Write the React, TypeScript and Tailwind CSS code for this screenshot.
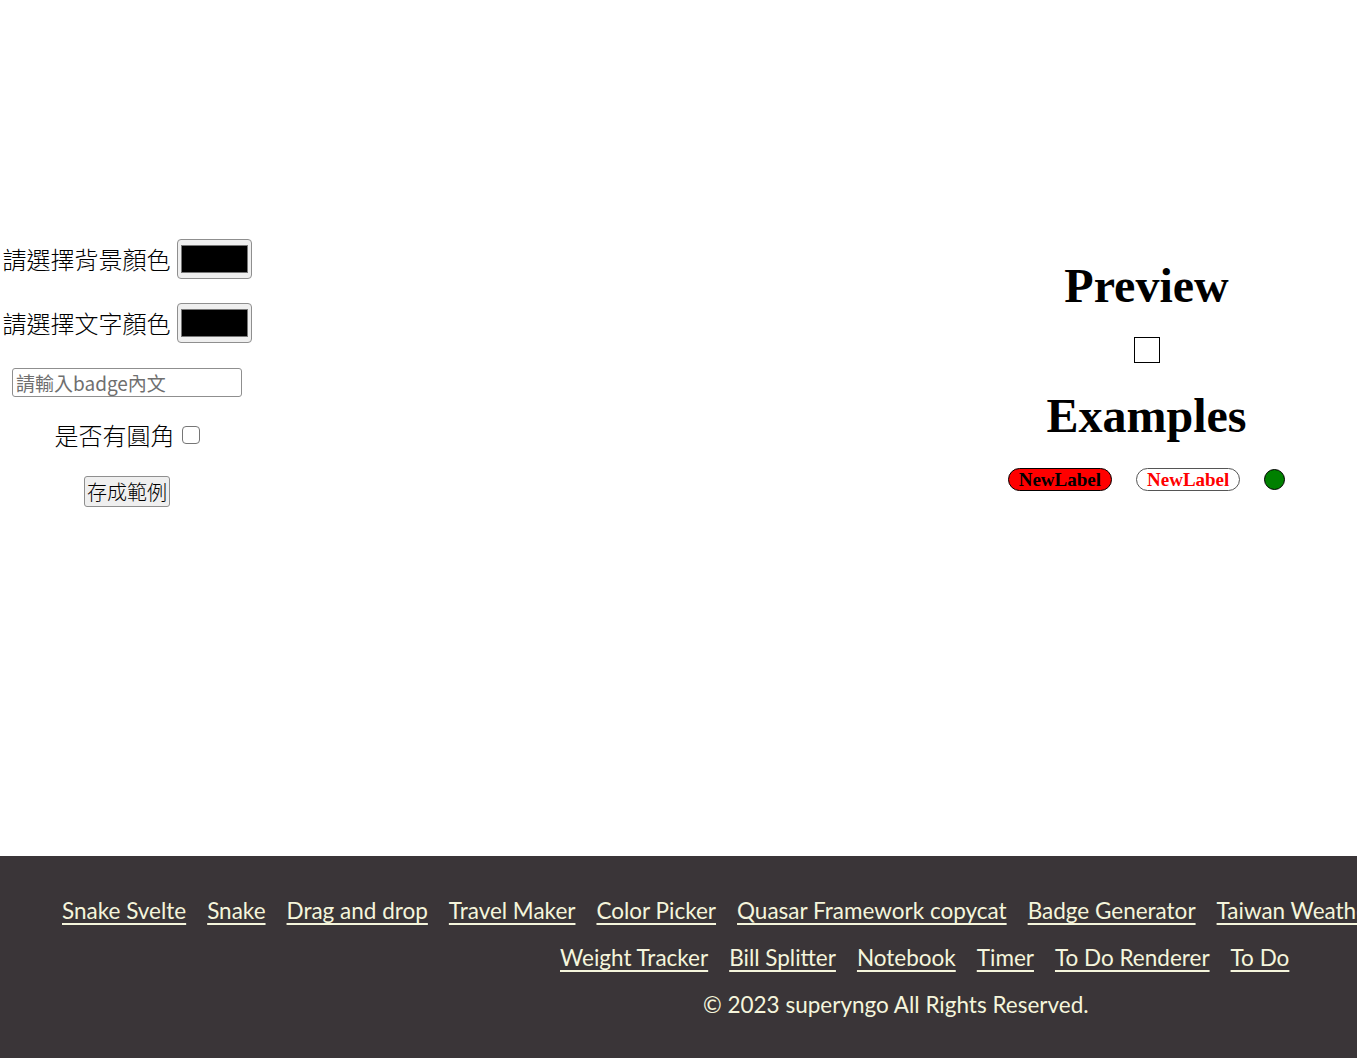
import React, { useState } from 'react';

const cjk = "font-['Noto_Sans_CJK_TC','Noto_Sans',sans-serif]";

const rowOneLinks = [
  'Snake Svelte',
  'Snake',
  'Drag and drop',
  'Travel Maker',
  'Color Picker',
  'Quasar Framework copycat',
  'Badge Generator',
  'Taiwan Weather',
];

const rowTwoLinks = ['Weight Tracker', 'Bill Splitter', 'Notebook', 'Timer', 'To Do Renderer', 'To Do'];

const ColorSwatch: React.FC = () => (
  <div className="w-[75px] h-[40px] rounded-[4px] border border-[#8f8f8f] bg-[#efefef] px-[3px] py-[5px] flex">
    <div className="flex-1 border border-[#777] bg-black" />
  </div>
);

const App: React.FC = () => {
  const [text, setText] = useState('');
  const [rounded, setRounded] = useState(false);

  return (
    <div className="min-h-screen bg-white">
      <main className="h-[856px] flex justify-between">
        {/* controls */}
        <div className={`w-[254px] pt-[239px] flex flex-col items-center text-black ${cjk}`}>
          <div className="h-[40px] flex items-center gap-[6px]">
            <span className="text-[24px] leading-[32px] font-light">請選擇背景顏色</span>
            <ColorSwatch />
          </div>
          <div className="mt-[24px] h-[40px] flex items-center gap-[6px]">
            <span className="text-[24px] leading-[32px] font-light">請選擇文字顏色</span>
            <ColorSwatch />
          </div>
          <input
            type="text"
            value={text}
            onChange={(e) => setText(e.target.value)}
            placeholder="請輸入badge內文"
            className={`mt-[25px] w-[230px] h-[29px] rounded-[3px] border border-[#8f8f8f] px-[3px] text-[19px] placeholder:text-[#6f6f6f] outline-none ${cjk}`}
          />
          <label className="mt-[20px] h-[36px] flex items-center gap-[7px]">
            <span className="text-[24px] leading-[32px] font-light">是否有圓角</span>
            <input
              type="checkbox"
              checked={rounded}
              onChange={(e) => setRounded(e.target.checked)}
              className="appearance-none w-[18px] h-[18px] rounded-[4px] border border-[#767676] bg-white"
            />
          </label>
          <button className="mt-[23px] w-[86px] h-[31px] rounded-[3px] border border-[#8f8f8f] bg-[#efefef] text-[20px] leading-none font-light">
            存成範例
          </button>
        </div>

        {/* preview */}
        <div className="w-[421px] pt-[258px] flex flex-col items-center font-['Liberation_Serif',serif] text-black">
          <h1 className="text-[48px] leading-[55px] font-bold">Preview</h1>
          <div className="mt-[24px] w-[26px] h-[26px] border border-black" />
          <h1 className="mt-[25px] text-[48px] leading-[55px] font-bold">Examples</h1>
          <div className="mt-[25px] flex items-center gap-[24px]">
            <span className="h-[23px] px-[10px] rounded-full border border-black bg-[#ff0000] text-black text-[19px] leading-[21px] font-bold">
              NewLabel
            </span>
            <span className="h-[23px] px-[10px] rounded-full border border-[#555] bg-white text-[#ff0000] text-[19px] leading-[21px] font-bold">
              NewLabel
            </span>
            <span className="w-[21px] h-[21px] rounded-full border border-black bg-[#008000]" />
          </div>
        </div>
      </main>

      <footer className="h-[202px] bg-[#3a3538] pt-[31px] overflow-hidden text-[#f5f5dc] font-['Lato',sans-serif] text-[22.5px] leading-[47px]">
        <div className="flex gap-[21px] pl-[62px] whitespace-nowrap">
          {rowOneLinks.map((name) => (
            <a key={name} href="#" className="underline underline-offset-[4px]">
              {name}
            </a>
          ))}
        </div>
        <div className="flex gap-[21px] pl-[560px] whitespace-nowrap">
          {rowTwoLinks.map((name) => (
            <a key={name} href="#" className="underline underline-offset-[4px]">
              {name}
            </a>
          ))}
        </div>
        <p className="pl-[703px] whitespace-nowrap">© 2023 superyngo All Rights Reserved.</p>
      </footer>
    </div>
  );
};

export default App;
